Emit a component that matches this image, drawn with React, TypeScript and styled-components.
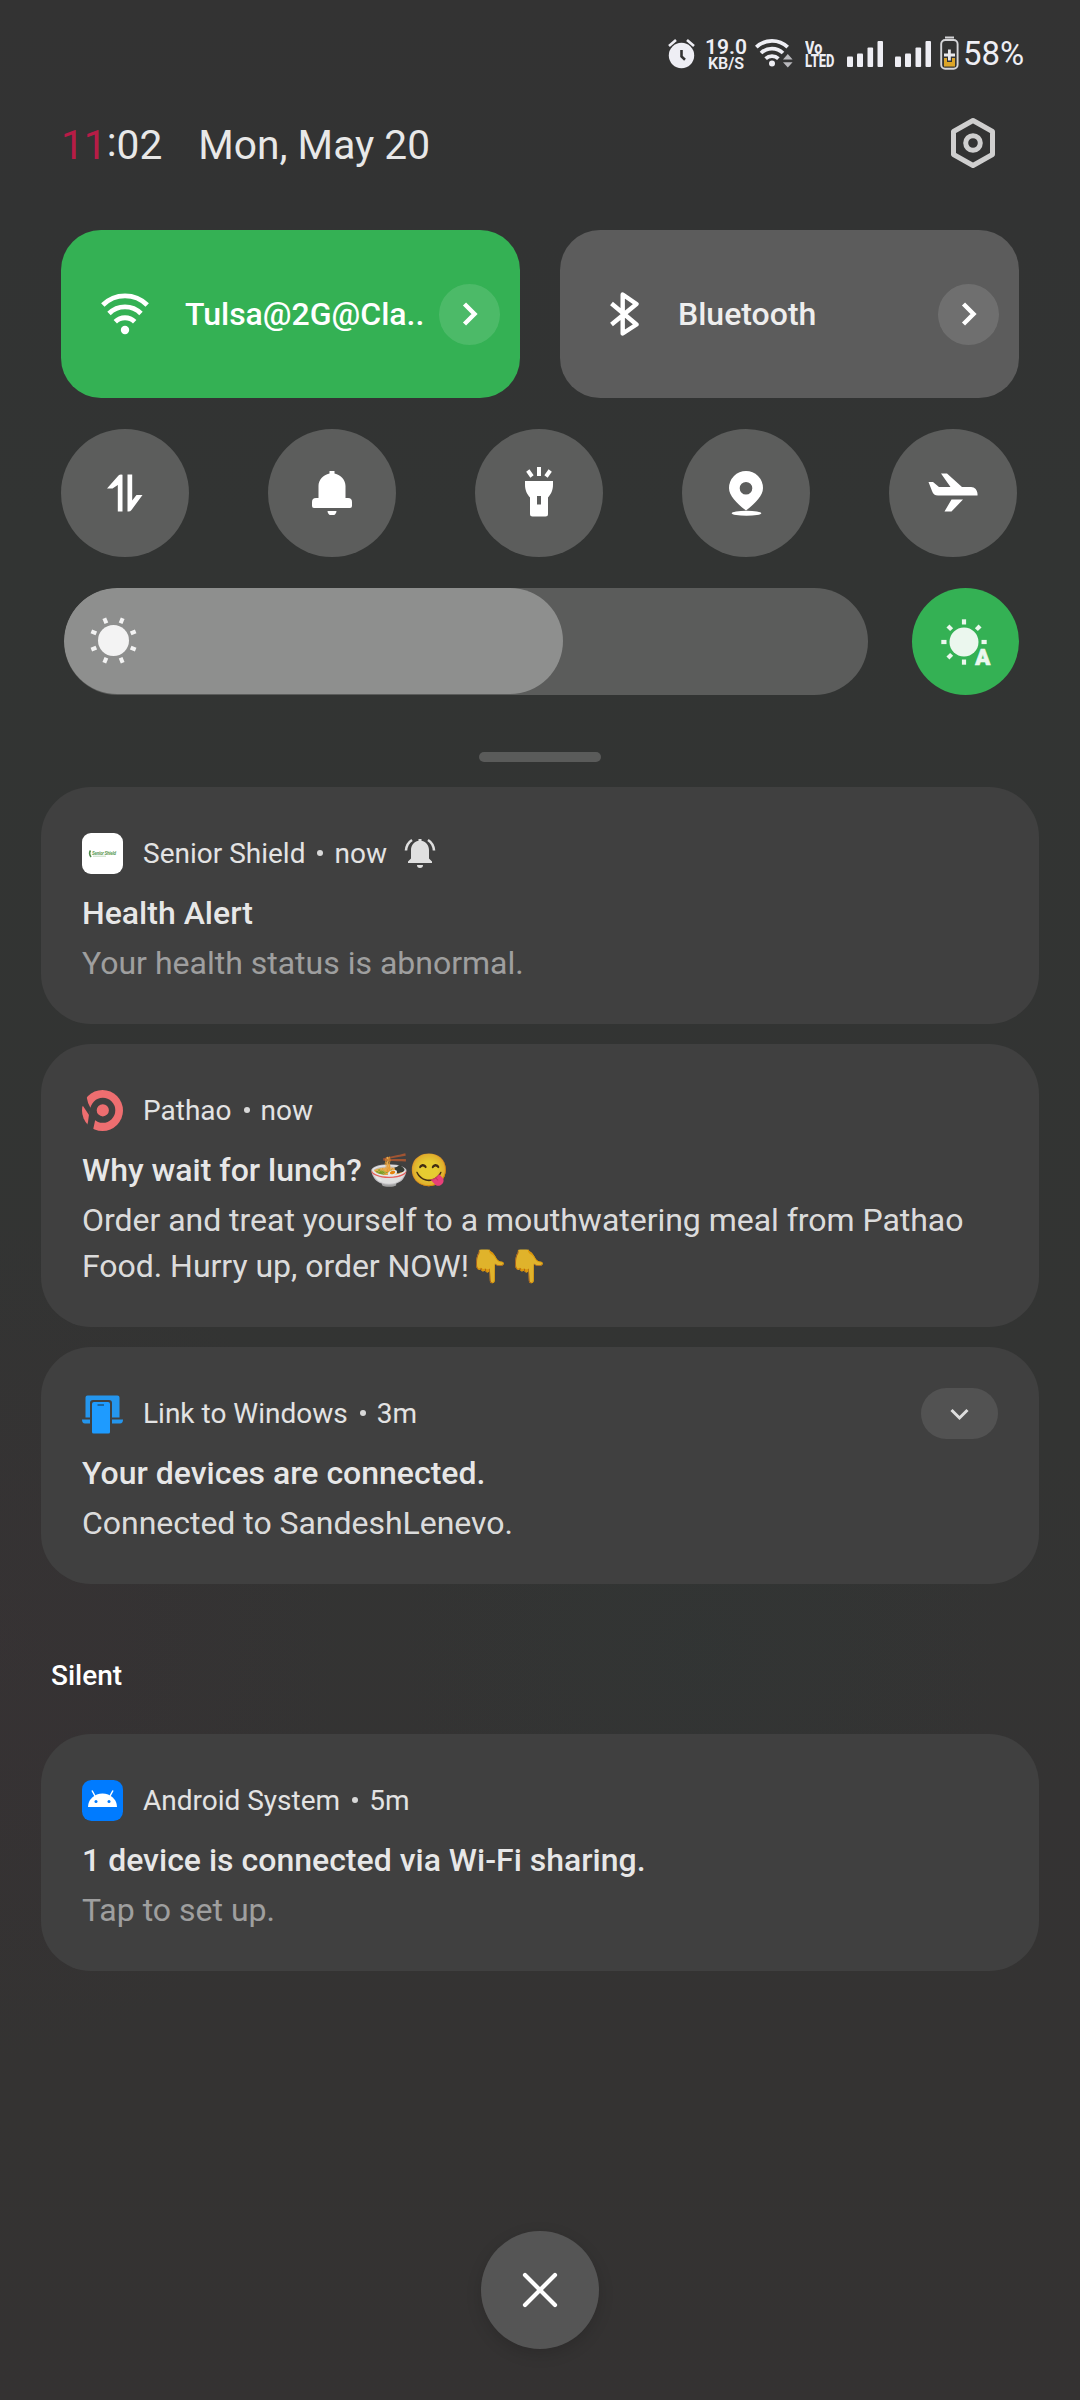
import React from "react";
import styled, { createGlobalStyle } from "styled-components";

const Global = createGlobalStyle`
  * { box-sizing: border-box; }
  body { margin: 0; background: #333; }
`;

const Screen = styled.main`
  width: 1080px;
  height: 2400px;
  overflow: hidden;
  display: flex;
  flex-direction: column;
  font-family: Roboto, "Noto Color Emoji", sans-serif;
  color: #e8e8e8;
  background:
    radial-gradient(ellipse 340px 420px at 0 1640px, rgba(58, 48, 52, 0.4), transparent),
    radial-gradient(ellipse 300px 300px at 700px 1650px, rgba(46, 56, 54, 0.3), transparent),
    linear-gradient(180deg, #333333 0, #323333 9%, #323433 22%, #333433 60%, #343333 75%, #343332 88%, #343232 100%);
`;

const StatusBar = styled.header`
  height: 108px;
  padding: 0 50px 0 667px;
  display: flex;
  align-items: center;
  color: #eeeef4;
`;

const Glyph = styled.svg<{ $gap?: number; $shift?: number }>`
  display: block;
  flex: none;
  margin-left: ${(p) => p.$gap ?? 0}px;
  margin-top: ${(p) => p.$shift ?? 0}px;
`;

const Speed = styled.div`
  width: 40px;
  flex: none;
  margin-left: 9px;
  display: flex;
  flex-direction: column;
  align-items: center;
  font-weight: 600;
  white-space: nowrap;
`;
const SpeedValue = styled.div`
  font-size: 21px;
  line-height: 18px;
`;
const SpeedUnit = styled.div`
  font-size: 16px;
  line-height: 15px;
`;

const Volte = styled.div`
  width: 33px;
  flex: none;
  margin-left: 10px;
  font-size: 18px;
  font-weight: 800;
  line-height: 13.5px;
  white-space: nowrap;
`;
const VolteLine = styled.div<{ $squeeze: number }>`
  transform: scaleX(${(p) => p.$squeeze});
  transform-origin: left center;
`;

const Percent = styled.span`
  margin-left: 4px;
  font-size: 33px;
  line-height: 40px;
`;

const ClockRow = styled.div`
  height: 122px;
  padding: 12px 83px 0 61px;
  display: flex;
  align-items: flex-start;
  font-size: 40.7px;
  line-height: 50px;
`;
const Hour = styled.span`
  color: #b71c46;
`;
const Colon = styled.span`
  display: inline-block;
  transform: translateY(-3px);
`;
const DateText = styled.span`
  margin-left: 36px;
  flex: 1;
`;

const TileRow = styled.section`
  padding: 0 61px;
  display: grid;
  grid-template-columns: 459px 459px;
  gap: 40px;
`;
const Tile = styled.button<{ $on?: boolean }>`
  height: 168px;
  border: 0;
  border-radius: 40px;
  padding: 0 20px 0 ${(p) => (p.$on ? 40 : 50)}px;
  display: flex;
  align-items: center;
  background: ${(p) => (p.$on ? "#34b154" : "#5c5c5c")};
  color: ${(p) => (p.$on ? "#ffffff" : "#eeeeee")};
  font: 500 32px/40px Roboto, sans-serif;
  text-align: left;
`;
const TileLabel = styled.span<{ $gap: number }>`
  flex: 1;
  margin-left: ${(p) => p.$gap}px;
  white-space: nowrap;
`;
const More = styled.span`
  width: 61px;
  height: 61px;
  border-radius: 50%;
  background: rgba(255, 255, 255, 0.12);
  display: grid;
  place-items: center;
`;

const ToggleRow = styled.section`
  margin-top: 31px;
  padding: 0 63px 0 61px;
  display: flex;
  justify-content: space-between;
`;
const Toggle = styled.button`
  width: 128px;
  height: 128px;
  border: 0;
  padding: 0;
  border-radius: 50%;
  background: #5c5d5c;
  display: grid;
  place-items: center;
`;

const BrightnessRow = styled.section`
  margin-top: 31px;
  padding: 0 61px 0 64px;
  display: flex;
  justify-content: space-between;
`;
const Track = styled.div`
  width: 804px;
  height: 107px;
  border-radius: 54px;
  background: #5b5c5b;
  overflow: hidden;
`;
const Fill = styled.div`
  width: 499px;
  height: 106px;
  border-radius: 53px;
  background: #8e8f8e;
  padding-left: 25px;
  display: flex;
  align-items: center;
`;
const Auto = styled.button`
  width: 107px;
  height: 107px;
  padding: 0;
  border: 0;
  border-radius: 50%;
  background: #34b154;
  display: grid;
  place-items: center;
`;

const Handle = styled.div`
  width: 122px;
  height: 10px;
  margin: 57px auto 25px;
  border-radius: 5px;
  background: #5a5b5a;
`;

const List = styled.section`
  padding: 0 41px;
  display: flex;
  flex-direction: column;
  gap: 20px;
`;
const Card = styled.article<{ $tall?: boolean }>`
  height: ${(p) => (p.$tall ? 283 : 237)}px;
  padding: 41px 41px 0;
  border-radius: 50px;
  background: #404040;
`;
const CardHead = styled.div`
  height: 51px;
  display: flex;
  align-items: center;
  font-size: 28px;
  line-height: 36px;
  color: #e3e3e3;
  white-space: nowrap;
`;
const AppName = styled.span`
  margin-left: 20px;
`;
const Dot = styled.span`
  width: 6px;
  height: 6px;
  margin: -2px 11px 0 12px;
  border-radius: 50%;
  background: #d8d8d8;
`;
const Expand = styled.button`
  width: 77px;
  height: 51px;
  margin-left: auto;
  padding: 0;
  border: 0;
  border-radius: 26px;
  background: #525252;
  display: grid;
  place-items: center;
`;
const Title = styled.h2`
  margin: 12px 0 0;
  font-size: 32px;
  line-height: 44px;
  font-weight: 500;
  color: rgba(255, 255, 255, 0.88);
  white-space: nowrap;
`;
const Body = styled.p<{ $dim?: boolean }>`
  margin: 5px 0 0;
  font-size: 32px;
  line-height: 46px;
  letter-spacing: ${(p) => (p.$dim ? 0 : -0.03)}px;
  color: ${(p) => (p.$dim ? "rgba(255, 255, 255, 0.5)" : "rgba(255, 255, 255, 0.84)")};
  white-space: pre;
`;

const Silent = styled.h3`
  margin: 73px 0 39px 51px;
  font-size: 28px;
  line-height: 38px;
  font-weight: 500;
  color: #ffffff;
`;

const Footer = styled.footer`
  margin-top: 260px;
  display: flex;
  justify-content: center;
`;
const Close = styled.button`
  width: 118px;
  height: 118px;
  padding: 0;
  border: 0;
  border-radius: 50%;
  background: #555555;
  box-shadow: 0 5px 16px rgba(0, 0, 0, 0.14);
  display: grid;
  place-items: center;
`;

const Chevron = () => (
  <svg width="16" height="26" viewBox="0 0 16 26" fill="none" stroke="#fff" strokeWidth="4.400">
    <path d="M2.500 3l10 10-10 10" />
  </svg>
);

const Alarm = () => (
  <Glyph width="30" height="32" viewBox="0 0 30 32" $shift={-2}>
    <circle cx="14.500" cy="18.500" r="12.700" fill="currentColor" />
    <path d="M2 9l7-6M27 9l-7-6" stroke="currentColor" strokeWidth="2.600" />
    <path d="M14.500 13v6.500l3.500 3.200" stroke="#323232" strokeWidth="2.600" fill="none" />
  </Glyph>
);

const StatusWifi = () => (
  <Glyph width="40" height="32" viewBox="0 0 40 32" $gap={9} $shift={-2}>
    <g fill="none" stroke="currentColor" strokeWidth="3.700">
      <path d="M1.300 10.200a22.500 22.500 0 0 1 31.400 0" />
      <path d="M6 16a16 16 0 0 1 22 0" />
      <path d="M10.600 21.600a9.300 9.300 0 0 1 12.800 0" />
    </g>
    <circle cx="17" cy="26.500" r="3" fill="currentColor" />
    <path d="M28 22.500l4.800-5.600 4.800 5.600zM28 25.200h9.600L32.800 30.500z" fill="#b9b9bd" />
  </Glyph>
);

const Signal = ({ gap }: { gap: number }) => (
  <Glyph width="37" height="28" viewBox="0 0 37 28" fill="currentColor" $gap={gap}>
    <rect x="0" y="16.500" width="6" height="10.500" rx="1" />
    <rect x="10" y="13.500" width="6" height="13.500" rx="1" />
    <rect x="20.500" y="7.500" width="5.600" height="19.500" rx="1" />
    <rect x="30.500" y="1" width="5.500" height="26" rx="1" />
  </Glyph>
);

const Battery = () => (
  <Glyph width="19" height="35" viewBox="0 0 19 35" $gap={8} $shift={-1}>
    <rect x="5" y="0.500" width="9" height="2" fill="#d5d5d8" />
    <rect x="1.200" y="4" width="16.400" height="28.800" rx="4" fill="none" stroke="#d5d5d8" strokeWidth="1.900" />
    <path d="M4 22h3v4h5v-4h3v8.500H4z" fill="#dca528" />
    <path d="M9.400 13.500v11M4 19h11" stroke="#e8e8ec" strokeWidth="2.800" />
  </Glyph>
);

const Settings = () => (
  <Glyph width="48" height="54" viewBox="0 0 48 54" fill="none" stroke="#cfcfcf" strokeWidth="5" strokeLinejoin="round" $shift={-4}>
    <path d="M24 4.500L43.500 15.500V38.500L24 49.500L4.500 38.500V15.500Z" />
    <circle cx="24" cy="27" r="7.300" />
  </Glyph>
);

const Wifi = () => (
  <svg width="48" height="42" viewBox="0 0 48 42">
    <g fill="none" stroke="#fff" strokeWidth="4.800">
      <path d="M1.800 12a31.500 31.500 0 0 1 44.400 0" />
      <path d="M8 20.500a22.500 22.500 0 0 1 32 0" />
      <path d="M14.300 28.800a13.700 13.700 0 0 1 19.400 0" />
    </g>
    <circle cx="24" cy="37" r="4.200" fill="#fff" />
  </svg>
);

const Bluetooth = () => (
  <svg width="30" height="44" viewBox="0 0 30 44" fill="none" stroke="#fff" strokeWidth="4.400" strokeLinejoin="round">
    <path d="M1.500 11.500L26.500 32.500L12.700 41.500V2.500L26.500 12L1.500 32.500" />
  </svg>
);

const DataArrows = () => (
  <svg width="36" height="38" viewBox="0 0 36 38" fill="#fff">
    <path d="M15.500 37.500h-4.700V11L5.500 14.500H0L11.500 1.500q1.500-1.500 4-.8zM20.500.5h4.700v26l4.300-5.500H35.500L24.500 36q-1.500 2-4 1.500z" />
  </svg>
);

const Bell = () => (
  <svg width="40" height="44" viewBox="0 0 40 44" fill="#fff">
    <path d="M17.500 0h5v2.500C29 4 33.500 9 33.500 15v12h2.500a4 4 0 0 1 4 4v4a2 2 0 0 1-2 2H2a2 2 0 0 1-2-2v-4a4 4 0 0 1 4-4h2.500V15c0-6 4.500-11 11-12.500zM15.500 40h9a4.500 4.500 0 0 1-9 0z" />
  </svg>
);

const Torch = () => (
  <svg width="28" height="52" viewBox="0 0 28 52" fill="#fff">
    <path d="M0 14h28v3.500c0 6-2 9.500-5 13v16.500q0 2.500-2.500 2.500h-13Q5 49.500 5 47V30.500C2 27 0 23.500 0 17.500zM12 29v8.500h4V29z" fillRule="evenodd" />
    <path d="M14 0v9M2.800 3.500l4.200 6M25.200 3.500l-4.200 6" stroke="#fff" strokeWidth="4" />
  </svg>
);

const Pin = () => (
  <svg width="34" height="46" viewBox="0 0 34 46" fill="#fff">
    <path d="M17 1a17 17 0 0 1 17 17c0 8-8 15.500-17 22.500C8 33.500 0 26 0 18A17 17 0 0 1 17 1zm0 11a6.300 6.300 0 1 0 0 12.600A6.300 6.300 0 0 0 17 12z" fillRule="evenodd" />
    <ellipse cx="17.500" cy="43.300" rx="14.800" ry="2.500" />
  </svg>
);

const Plane = () => (
  <svg width="50" height="40" viewBox="0 0 50 40" fill="#fff">
    <path d="M13 .5h6L34 14h9c4 0 7 3.500 6.500 8.500H10Q5.500 22.500 4 18L.5 9H5l6 5h11.500zM23.500 26.500h11.500L23.500 38.500h-7z" />
  </svg>
);

const rays = (count: number, start: number, cx: number, cy: number, inner: number, outer: number) =>
  Array.from({ length: count }, (_, i) => start + i * 45).map((deg) => {
    const a = (deg * Math.PI) / 180;
    return (
      <line key={deg} x1={cx + Math.cos(a) * inner} y1={cy + Math.sin(a) * inner} x2={cx + Math.cos(a) * outer} y2={cy + Math.sin(a) * outer} />
    );
  });

const Sun = () => (
  <svg width="48" height="48" viewBox="0 0 48 48">
    <circle cx="24.500" cy="23.500" r="15.500" fill="#f3f3f3" />
    <g stroke="#f3f3f3" strokeWidth="4">{rays(8, 22.5, 24.5, 23.5, 18.6, 24)}</g>
  </svg>
);

const AutoSun = () => (
  <svg width="54" height="60" viewBox="0 -6 54 60">
    <g stroke="#ebf7ee" strokeWidth="4.200">
      {rays(1, 0, 25, 24, 17.5, 22.7)}
      {rays(6, 90, 25, 24, 17.5, 22.7)}
    </g>
    <circle cx="25" cy="24" r="14.500" fill="#ebf7ee" />
    <path d="M36 45L40.500 30.500H47.500L52 45" fill="#34b154" />
    <text x="43.800" y="46.500" textAnchor="middle" fontFamily="Roboto" fontWeight="900" fontSize="22" fill="#ebf7ee" stroke="#ebf7ee" strokeWidth="0.700">A</text>
  </svg>
);

const ShieldIcon = () => (
  <svg width="41" height="41" viewBox="0 0 41 41">
    <rect width="41" height="41" rx="9" fill="#fff" />
    <path d="M8.500 17.500q-2 3 .5 6.500" stroke="#4f8a4a" strokeWidth="1.600" fill="none" />
    <text x="10" y="21.800" fontFamily="Roboto" fontStyle="italic" fontWeight="700" fontSize="4.600" textLength="24" fill="#5d9a57">Senior Shield</text>
    <path d="M11 23.200h13" stroke="#a9cba6" strokeWidth=".7" />
  </svg>
);

const Ringing = () => (
  <Glyph width="32" height="31" viewBox="0 0 32 31" fill="#dfdfdf" $gap={17}>
    <path d="M14.500 1h3v1.700c5 1 7.500 5 7.500 9.300v8.500l3 3V25H4v-1.500l3-3V12c0-4.300 2.500-8.300 7.500-9.300zM13 27h6a3 3 0 0 1-6 0z" />
    <path d="M8 2Q2.500 5.500 2 12.500M24 2q5.500 3.500 6 10.500" fill="none" stroke="#dfdfdf" strokeWidth="2.600" />
  </Glyph>
);

const PathaoIcon = () => (
  <svg width="41" height="41" viewBox="0 0 41 41">
    <circle cx="20.500" cy="20.500" r="20.500" fill="#ee6e70" />
    <circle cx="20.800" cy="20.300" r="9.300" fill="none" stroke="#404040" strokeWidth="6.400" />
    <path d="M8 17L14.500 24L10.800 41H3.500L6 32z" fill="#404040" />
    <path d="M-1 4L4.500 6.500Q5.500 13 8.500 18L7 25L1 16L-1 17z" fill="#404040" />
  </svg>
);

const LinkIcon = () => (
  <svg width="41" height="41" viewBox="0 0 41 41">
    <path d="M3.500 4.500q0-2 2-2h30q2 0 2 2V24.500H30V10q0-3-3-3H11Q8 7 8 10V24.500H3.500zM0 26.500h8v4H3q-3 0-3-4zM30 26.500h11q0 4-3 4h-8z" fill="#2496ee" />
    <path d="M10 11q0-2 2-2h14q2 0 2 2v28q0 1.500-1.500 1.500h-15Q10 40.500 10 39z" fill="#1e9bff" />
    <path d="M15.500 12h6.500" stroke="#1b5f96" strokeWidth="1.800" />
  </svg>
);

const AndroidIcon = () => (
  <svg width="41" height="41" viewBox="0 0 41 41">
    <rect width="41" height="41" rx="9.500" fill="#007bff" />
    <path d="M6 27a14.500 13.500 0 0 1 29 0z" fill="#fff" />
    <path d="M13 16l-3-5.500M28 16l3-5.500" stroke="#fff" strokeWidth="1.500" />
    <circle cx="14" cy="21.500" r="1.500" fill="#007bff" />
    <circle cx="27" cy="21.500" r="1.500" fill="#007bff" />
  </svg>
);

type NoticeProps = {
  icon: React.ReactNode;
  app: string;
  time: string;
  title: string;
  body: string;
  dim?: boolean;
  tall?: boolean;
  extra?: React.ReactNode;
};

const Notice = ({ icon, app, time, title, body, dim, tall, extra }: NoticeProps) => (
  <Card $tall={tall}>
    <CardHead>
      {icon}
      <AppName>{app}</AppName>
      <Dot />
      <span>{time}</span>
      {extra}
    </CardHead>
    <Title>{title}</Title>
    <Body $dim={dim}>{body}</Body>
  </Card>
);

export default function App() {
  return (
    <Screen>
      <Global />
      <StatusBar>
        <Alarm />
        <Speed>
          <SpeedValue>19.0</SpeedValue>
          <SpeedUnit>KB/S</SpeedUnit>
        </Speed>
        <StatusWifi />
        <Volte>
          <VolteLine $squeeze={0.8}>Vo</VolteLine>
          <VolteLine $squeeze={0.72}>LTED</VolteLine>
        </Volte>
        <Signal gap={9} />
        <Signal gap={11} />
        <Battery />
        <Percent>58%</Percent>
      </StatusBar>
      <ClockRow>
        <span>
          <Hour>11</Hour>
          <Colon>:</Colon>02
        </span>
        <DateText>Mon, May 20</DateText>
        <Settings />
      </ClockRow>
      <TileRow>
        <Tile $on>
          <Wifi />
          <TileLabel $gap={36}>Tulsa@2G@Cla..</TileLabel>
          <More><Chevron /></More>
        </Tile>
        <Tile>
          <Bluetooth />
          <TileLabel $gap={38}>Bluetooth</TileLabel>
          <More><Chevron /></More>
        </Tile>
      </TileRow>
      <ToggleRow>
        <Toggle><DataArrows /></Toggle>
        <Toggle><Bell /></Toggle>
        <Toggle><Torch /></Toggle>
        <Toggle><Pin /></Toggle>
        <Toggle><Plane /></Toggle>
      </ToggleRow>
      <BrightnessRow>
        <Track><Fill><Sun /></Fill></Track>
        <Auto><AutoSun /></Auto>
      </BrightnessRow>
      <Handle />
      <List>
        <Notice icon={<ShieldIcon />} app="Senior Shield" time="now" title="Health Alert" body="Your health status is abnormal." dim extra={<Ringing />} />
        <Notice
          icon={<PathaoIcon />}
          app="Pathao"
          time="now"
          title="Why wait for lunch? 🍜😋"
          body={"Order and treat yourself to a mouthwatering meal from Pathao\nFood. Hurry up, order NOW!👇👇"}
          tall
        />
        <Notice
          icon={<LinkIcon />}
          app="Link to Windows"
          time="3m"
          title="Your devices are connected."
          body="Connected to SandeshLenevo."
          extra={
            <Expand>
              <svg width="20" height="14" viewBox="0 0 20 14" fill="none" stroke="#dedede" strokeWidth="3">
                <path d="M1.500 3l8 8 8-8" />
              </svg>
            </Expand>
          }
        />
      </List>
      <Silent>Silent</Silent>
      <List>
        <Notice icon={<AndroidIcon />} app="Android System" time="5m" title="1 device is connected via Wi-Fi sharing." body="Tap to set up." dim />
      </List>
      <Footer>
        <Close>
          <svg width="36" height="36" viewBox="0 0 36 36" fill="none" stroke="#fff" strokeWidth="4.200" strokeLinecap="round">
            <path d="M3 3l30 30M33 3L3 33" />
          </svg>
        </Close>
      </Footer>
    </Screen>
  );
}
